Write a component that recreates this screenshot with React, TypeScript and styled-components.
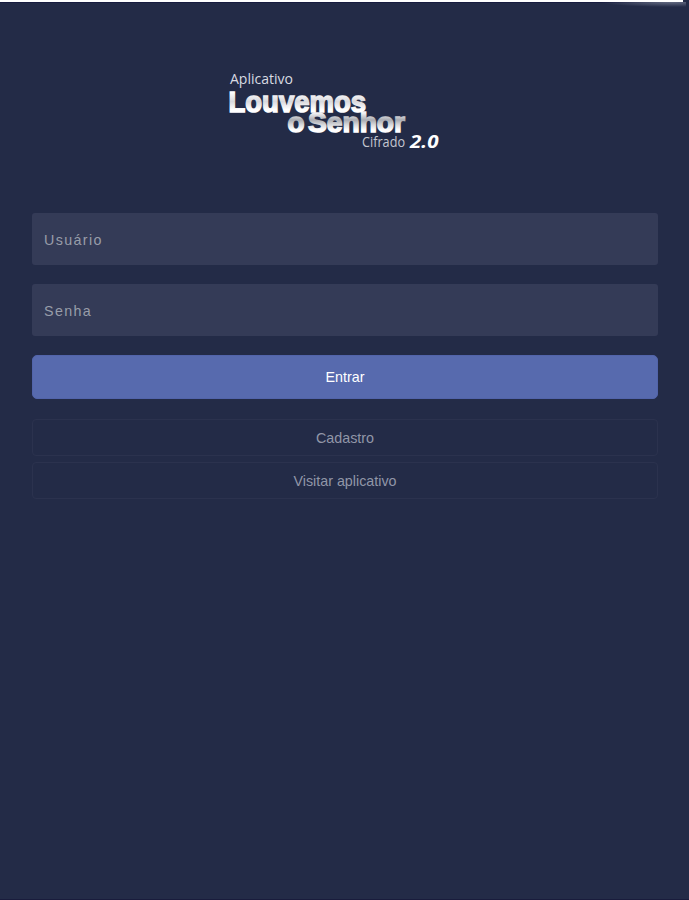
import React from "react";
import styled, { createGlobalStyle } from "styled-components";

const GlobalStyle = createGlobalStyle`
  * { box-sizing: border-box; }
  body { margin: 0; background: #232b47; }
`;

const Screen = styled.div`
  position: relative;
  display: flex;
  flex-direction: column;
  height: 900px;
  background: #232b47;
  border-bottom: 1px solid #191c3c;
  font-family: "Liberation Sans", Arial, sans-serif;
`;

const TopEdge = styled.div`
  width: 683px;
  height: 2px;
  flex: none;
  background: #fff;
  box-shadow: 0 1px 0 #171c40;
`;

const EdgeGlow = styled.div`
  position: absolute;
  top: 2px;
  left: 596px;
  width: 90px;
  height: 6px;
  background: radial-gradient(ellipse 70px 5px at 75px 0, #646b82, rgba(35, 43, 71, 0));
`;

const Header = styled.header`
  display: flex;
  padding: 60px 0 0 220px;
  height: 211px;
`;

const Form = styled.form`
  display: flex;
  flex-direction: column;
  padding: 0 31px 0 32px;
`;

const Field = styled.input`
  height: 52px;
  margin: 0 0 19px;
  padding: 2px 12px 0;
  border: 0;
  border-radius: 3px;
  outline: 0;
  background: #343b57;
  color: #c3c6ce;
  font: 14.3px "Liberation Sans", Arial, sans-serif;
  letter-spacing: 1.35px;
  &::placeholder { color: #989da9; opacity: 1; }
`;

const Button = styled.button<{ $primary?: boolean }>`
  height: ${(p) => (p.$primary ? 44 : 37)}px;
  margin: 0 0 ${(p) => (p.$primary ? 20 : 6)}px;
  padding: 0;
  border: 1px solid ${(p) => (p.$primary ? "#5264aa" : "#2b324e")};
  border-radius: ${(p) => (p.$primary ? 5 : 4)}px;
  background: ${(p) => (p.$primary ? "#576aae" : "transparent")};
  color: ${(p) => (p.$primary ? "#fff" : "#9196a7")};
  font: 14.3px "Liberation Sans", Arial, sans-serif;
`;

function Logo() {
  return (
    <svg width="230" height="95" viewBox="0 0 230 95" aria-label="Louvemos o Senhor">
      <defs>
        <linearGradient id="silver" gradientUnits="userSpaceOnUse" x1="0" y1="28" x2="0" y2="51">
          <stop offset="0.1" stopColor="#fff" />
          <stop offset="0.5" stopColor="#d9d9de" />
          <stop offset="0.85" stopColor="#fff" />
        </linearGradient>
        <linearGradient id="steel" gradientUnits="userSpaceOnUse" x1="0" y1="50" x2="0" y2="71">
          <stop offset="0.05" stopColor="#f3f3f5" />
          <stop offset="0.38" stopColor="#a9abb2" />
          <stop offset="0.6" stopColor="#d6d7da" />
          <stop offset="0.85" stopColor="#fff" />
        </linearGradient>
      </defs>
      <text x="10" y="22" fontFamily="Open Sans" fontSize="14" fill="#d9dbe2" textLength="63" lengthAdjust="spacingAndGlyphs">Aplicativo</text>
      <g fontFamily="Liberation Sans" fontWeight="700" strokeWidth="1.5">
        <text x="67.5" y="70" fontSize="27" fill="url(#steel)" stroke="url(#steel)" textLength="17" lengthAdjust="spacingAndGlyphs">o</text>
        <text x="88" y="70" fontSize="27" fill="url(#steel)" stroke="url(#steel)" textLength="97" lengthAdjust="spacingAndGlyphs">Senhor</text>
        <text x="8.5" y="50" fontSize="29" fill="url(#silver)" stroke="url(#silver)" textLength="137.5" lengthAdjust="spacingAndGlyphs">Louvemos</text>
      </g>
      <text x="142" y="85" fontFamily="Open Sans" fontSize="14" fill="#c3c6d0" textLength="43" lengthAdjust="spacingAndGlyphs">Cifrado</text>
      <text x="190" y="85.5" fontFamily="Open Sans" fontSize="18" fontWeight="700" fontStyle="italic" fill="#fff" textLength="28.5" lengthAdjust="spacingAndGlyphs">2.0</text>
    </svg>
  );
}

export default function App() {
  return (
    <>
      <GlobalStyle />
      <Screen>
        <TopEdge />
        <EdgeGlow />
        <Header>
          <Logo />
        </Header>
        <Form onSubmit={(e) => e.preventDefault()}>
          <Field placeholder="Usuário" />
          <Field type="password" placeholder="Senha" />
          <Button $primary type="submit">Entrar</Button>
          <Button type="button">Cadastro</Button>
          <Button type="button">Visitar aplicativo</Button>
        </Form>
      </Screen>
    </>
  );
}
